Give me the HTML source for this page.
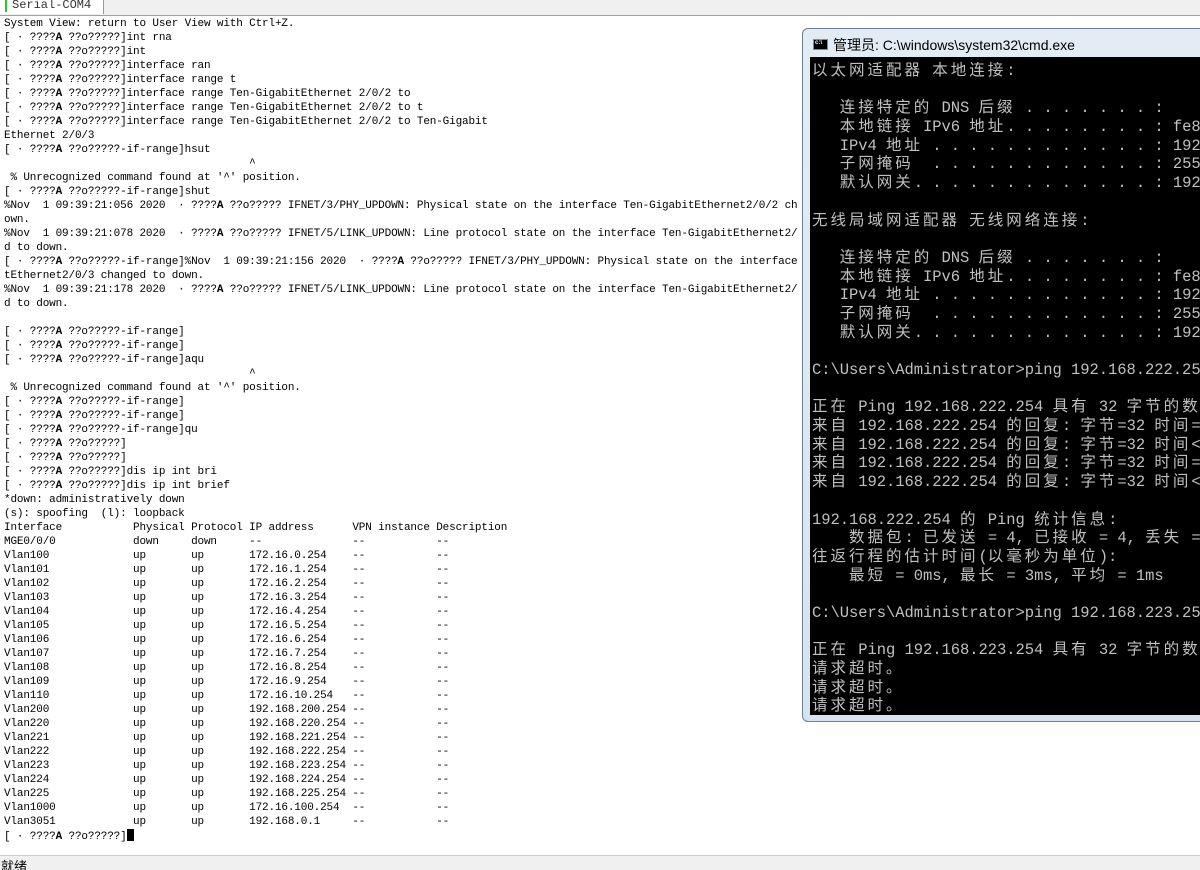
<!DOCTYPE html>
<html><head><meta charset="utf-8"><style>
html,body{margin:0;padding:0;width:1200px;height:870px;overflow:hidden;background:#fff;position:relative}
.tabbar{position:absolute;left:0;top:0;width:1200px;height:15px;background:#f0f0f0;border-bottom:1px solid #a0a0a0}
.tab{position:absolute;left:0;top:0;height:14px;width:104px;background:#fff;border-right:1px solid #999;font:12px "Liberation Mono",monospace;color:#333;line-height:10px;padding-left:12px;box-sizing:border-box;overflow:hidden}
.tab:before{content:"";position:absolute;left:5px;top:0;width:2px;height:12px;background:#2c2}
pre.t{position:absolute;left:4px;top:17px;margin:0;font:11px "Liberation Mono","Noto Sans CJK SC",monospace;letter-spacing:-0.15px;line-height:14px;color:#000;white-space:pre}
.cur{display:inline-block;width:7px;height:12px;background:#000;vertical-align:-2px}
.status{position:absolute;left:0;top:855px;width:1200px;height:15px;background:#f0f0f0;border-top:1px solid #ccc;font:13px "Liberation Sans","Noto Sans CJK SC",sans-serif;line-height:22px;padding-left:1px;overflow:hidden}
.win{position:absolute;left:802px;top:28px;width:420px;height:694px;background:linear-gradient(#e3ecf5,#d6e3f0);border:1px solid #6d7f95;border-radius:6px;box-sizing:border-box}
.ttl{position:absolute;left:30px;top:6px;font:14px "Liberation Sans","Noto Sans CJK SC",sans-serif;color:#000}
.ico{position:absolute;left:10px;top:10px;width:15px;height:11px;background:#000;border:1px solid #888;box-sizing:border-box}
.ico:after{content:"c:\\";position:absolute;left:1px;top:0;color:#fff;font:bold 6px "Liberation Sans";}
.con{position:absolute;left:7px;top:28px;width:420px;height:658px;background:#000;overflow:hidden}
pre.c{margin:0;position:absolute;left:2px;top:5px;font:15.5px "Liberation Mono","Noto Sans CJK SC",monospace;letter-spacing:-0.05px;line-height:18.68px;color:#c0c0c0;white-space:pre}
pre.c i{font-style:normal;letter-spacing:3px}
</style></head><body>
<div class="tabbar"><div class="tab">Serial-COM4</div></div>
<pre class="t">System View: return to User View with Ctrl+Z.
[ · ????<b>A</b> ??o?????]int rna
[ · ????<b>A</b> ??o?????]int
[ · ????<b>A</b> ??o?????]interface ran
[ · ????<b>A</b> ??o?????]interface range t
[ · ????<b>A</b> ??o?????]interface range Ten-GigabitEthernet 2/0/2 to
[ · ????<b>A</b> ??o?????]interface range Ten-GigabitEthernet 2/0/2 to t
[ · ????<b>A</b> ??o?????]interface range Ten-GigabitEthernet 2/0/2 to Ten-Gigabit
Ethernet 2/0/3
[ · ????<b>A</b> ??o?????-if-range]hsut
                                      ^
 % Unrecognized command found at '^' position.
[ · ????<b>A</b> ??o?????-if-range]shut
%Nov  1 09:39:21:056 2020  · ????<b>A</b> ??o????? IFNET/3/PHY_UPDOWN: Physical state on the interface Ten-GigabitEthernet2/0/2 ch
own.
%Nov  1 09:39:21:078 2020  · ????<b>A</b> ??o????? IFNET/5/LINK_UPDOWN: Line protocol state on the interface Ten-GigabitEthernet2/
d to down.
[ · ????<b>A</b> ??o?????-if-range]%Nov  1 09:39:21:156 2020  · ????<b>A</b> ??o????? IFNET/3/PHY_UPDOWN: Physical state on the interface
tEthernet2/0/3 changed to down.
%Nov  1 09:39:21:178 2020  · ????<b>A</b> ??o????? IFNET/5/LINK_UPDOWN: Line protocol state on the interface Ten-GigabitEthernet2/
d to down.

[ · ????<b>A</b> ??o?????-if-range]
[ · ????<b>A</b> ??o?????-if-range]
[ · ????<b>A</b> ??o?????-if-range]aqu
                                      ^
 % Unrecognized command found at '^' position.
[ · ????<b>A</b> ??o?????-if-range]
[ · ????<b>A</b> ??o?????-if-range]
[ · ????<b>A</b> ??o?????-if-range]qu
[ · ????<b>A</b> ??o?????]
[ · ????<b>A</b> ??o?????]
[ · ????<b>A</b> ??o?????]dis ip int bri
[ · ????<b>A</b> ??o?????]dis ip int brief
*down: administratively down
(s): spoofing  (l): loopback
Interface           Physical Protocol IP address      VPN instance Description
MGE0/0/0            down     down     --              --           --
Vlan100             up       up       172.16.0.254    --           --
Vlan101             up       up       172.16.1.254    --           --
Vlan102             up       up       172.16.2.254    --           --
Vlan103             up       up       172.16.3.254    --           --
Vlan104             up       up       172.16.4.254    --           --
Vlan105             up       up       172.16.5.254    --           --
Vlan106             up       up       172.16.6.254    --           --
Vlan107             up       up       172.16.7.254    --           --
Vlan108             up       up       172.16.8.254    --           --
Vlan109             up       up       172.16.9.254    --           --
Vlan110             up       up       172.16.10.254   --           --
Vlan200             up       up       192.168.200.254 --           --
Vlan220             up       up       192.168.220.254 --           --
Vlan221             up       up       192.168.221.254 --           --
Vlan222             up       up       192.168.222.254 --           --
Vlan223             up       up       192.168.223.254 --           --
Vlan224             up       up       192.168.224.254 --           --
Vlan225             up       up       192.168.225.254 --           --
Vlan1000            up       up       172.16.100.254  --           --
Vlan3051            up       up       192.168.0.1     --           --
[ · ????<b>A</b> ??o?????]<span class="cur"></span></pre>
<div class="status">就绪</div>
<div class="win">
<div class="ico"></div><div class="ttl">管理员: C:\windows\system32\cmd.exe</div>
<div class="con"><pre class="c"><i>以太网适配器</i> <i>本地连接</i>:

   <i>连接特定的</i> DNS <i>后缀</i> . . . . . . . :
   <i>本地链接</i> IPv6 <i>地址</i>. . . . . . . . : fe80::
   IPv4 <i>地址</i> . . . . . . . . . . . . : 192.168
   <i>子网掩码</i>  . . . . . . . . . . . . : 255.255
   <i>默认网关</i>. . . . . . . . . . . . . : 192.168

<i>无线局域网适配器</i> <i>无线网络连接</i>:

   <i>连接特定的</i> DNS <i>后缀</i> . . . . . . . :
   <i>本地链接</i> IPv6 <i>地址</i>. . . . . . . . : fe80::
   IPv4 <i>地址</i> . . . . . . . . . . . . : 192.168
   <i>子网掩码</i>  . . . . . . . . . . . . : 255.255
   <i>默认网关</i>. . . . . . . . . . . . . : 192.168

C:\Users\Administrator>ping 192.168.222.254

<i>正在</i> Ping 192.168.222.254 <i>具有</i> 32 <i>字节的数据</i>:
<i>来自</i> 192.168.222.254 <i>的回复</i>: <i>字节</i>=32 <i>时间</i>=1ms
<i>来自</i> 192.168.222.254 <i>的回复</i>: <i>字节</i>=32 <i>时间</i>&lt;1ms
<i>来自</i> 192.168.222.254 <i>的回复</i>: <i>字节</i>=32 <i>时间</i>=3ms
<i>来自</i> 192.168.222.254 <i>的回复</i>: <i>字节</i>=32 <i>时间</i>&lt;1ms

192.168.222.254 <i>的</i> Ping <i>统计信息</i>:
    <i>数据包</i>: <i>已发送</i> = 4, <i>已接收</i> = 4, <i>丢失</i> = 0
<i>往返行程的估计时间</i>(<i>以毫秒为单位</i>):
    <i>最短</i> = 0ms, <i>最长</i> = 3ms, <i>平均</i> = 1ms

C:\Users\Administrator>ping 192.168.223.254

<i>正在</i> Ping 192.168.223.254 <i>具有</i> 32 <i>字节的数据</i>:
<i>请求超时。</i>
<i>请求超时。</i>
<i>请求超时。</i></pre></div>
</div>
</body></html>
